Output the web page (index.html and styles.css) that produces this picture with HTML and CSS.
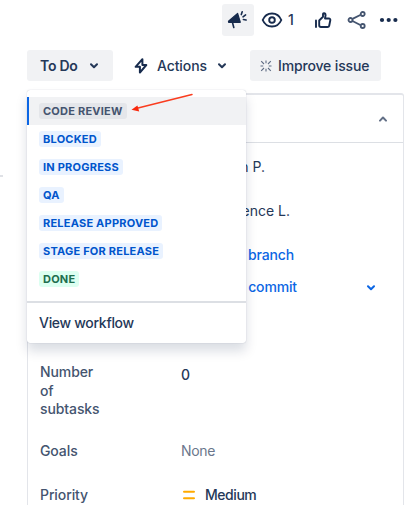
FILE: index.html
```html
<!DOCTYPE html>
<html lang="en">
<head>
<meta charset="utf-8">
<title>Issue details</title>
<link rel="stylesheet" href="styles.css">
</head>
<body>
<main class="page">
  <nav class="toolbar">
    <span class="announce"><svg width="32" height="32" viewBox="0 0 32 32"><path d="M6.5 17.3 15.6 9.5 18.3 18.3 6.8 18.5Z" fill="#172b4d" stroke="#172b4d" stroke-width="1.2" stroke-linejoin="round"/><path d="M10.6 19 11.8 23.5M19.3 10.6 20.2 7.7M21 12.8 23.6 10.9M21.4 15.5 24.1 16" fill="none" stroke="#172b4d" stroke-width="1.6" stroke-linecap="round"/></svg></span>
    <span class="watch"><svg width="22" height="18" viewBox="0 0 22 18" fill="none" stroke="#172b4d" stroke-width="1.9"><path d="M1.7 9C3.5 4.8 7 2.5 11 2.5S18.5 4.8 20.3 9C18.5 13.2 15 15.5 11 15.5S3.5 13.2 1.7 9Z"/><circle cx="11" cy="9" r="2.8"/></svg><span>1</span></span>
    <svg class="like" width="18" height="18" viewBox="0 0 18 18" fill="none" stroke="#172b4d" stroke-width="1.9" stroke-linejoin="round" stroke-linecap="round"><path d="M2 9.5V16M5.2 9.5 9 5.8V3.2C9 1.7 11.6 1.7 11.6 4L11 7.5H14.8C16 7.5 16.5 8.3 16.3 9.3L15.2 14.7C15 15.6 14.4 16 13.5 16H7C5.8 16 5.2 15.4 5.2 14.3Z"/></svg>
    <svg class="share" width="20" height="20" viewBox="0 0 20 20" fill="none" stroke="#44546f" stroke-width="1.8"><path d="M5.5 8.9 13.3 5M5.5 11 13.3 15"/><circle cx="3.5" cy="10" r="2"/><circle cx="15.7" cy="4" r="2"/><circle cx="15.7" cy="16" r="2"/></svg>
    <svg class="more" width="20" height="6" viewBox="0 0 20 6" fill="#172b4d"><circle cx="3" cy="3" r="2.1"/><circle cx="9.7" cy="3" r="2.1"/><circle cx="16.4" cy="3" r="2.1"/></svg>
  </nav>

  <div class="actions">
    <div class="button status"><span class="todo">To Do</span><svg width="8" height="6" viewBox="0 0 8 6"><path d="M1 1.2 4 4.3 7 1.2" class="chevron"/></svg></div>
    <div class="button plain"><svg class="bolt" width="14" height="18" viewBox="0 0 14 18"><path d="M8.4 2.2 1.6 9.8H5.9V15.6L12.3 8H8.4Z" fill="none" stroke="#172b4d" stroke-width="2" stroke-linejoin="round"/></svg><span class="actions-text">Actions</span><svg width="8" height="6" viewBox="0 0 8 6"><path d="M1 1.2 4 4.3 7 1.2" class="chevron"/></svg></div>
    <div class="button improve"><svg width="12" height="12" viewBox="0 0 12 12"><path d="M6 .5V3.2M6 8.8V11.5M.5 6H3.2M8.8 6H11.5M1.2 1.2 4 4M8 8 10.8 10.8M10.8 1.2 8 4M4 8 1.2 10.8" stroke="#5e6c84" stroke-width="1.1"/></svg><span class="improve-text">Improve issue</span></div>
  </div>

  <span class="edge-line"></span>

  <section class="panel">
    <header class="panel-head"><svg width="8" height="6" viewBox="0 0 8 6"><path d="M1 4.6 4 1.5 7 4.6" class="chevron muted"/></svg></header>
    <div class="fields">
      <div class="row person"><span class="end-p">n P.</span></div>
      <div class="row reporter"><span class="end-l">ence L.</span></div>
      <div class="row branch"><span class="end-b">branch</span></div>
      <div class="row commit"><span class="end-c">commit</span><svg width="10" height="6" viewBox="0 0 10 6"><path d="M2 1.2 5 4.2 8 1.2" class="chevron blue"/></svg></div>
      <div class="row subtasks"><span class="label">Number<br>of<br>subtasks</span><span class="zero">0</span></div>
      <div class="row goals"><span class="label">Goals</span><span class="none">None</span></div>
      <div class="row priority"><span class="label">Priority</span><span class="medium"><svg width="16" height="12" viewBox="0 0 16 12"><path d="M3 2.8H13M3 9.2H13" stroke="#ffab00" stroke-width="2" stroke-linecap="round"/></svg><span class="medium-text">Medium</span></span></div>
    </div>
  </section>

  <div class="menu">
    <div class="option selected"><span class="tag gray">CODE REVIEW</span></div>
    <div class="option"><span class="tag">BLOCKED</span></div>
    <div class="option"><span class="tag">IN PROGRESS</span></div>
    <div class="option"><span class="tag">QA</span></div>
    <div class="option"><span class="tag">RELEASE APPROVED</span></div>
    <div class="option"><span class="tag">STAGE FOR RELEASE</span></div>
    <div class="option"><span class="tag green">DONE</span></div>
    <div class="workflow">View workflow</div>
  </div>
  <svg class="arrow" width="66" height="22" viewBox="0 0 66 22"><path d="M62 2.5 8 16" stroke="#fa3c1e" stroke-width="1.5" stroke-linecap="round"/><path d="M1.5 17.7 7.4 13.4 9.2 19.5Z" fill="#f9290d"/></svg>
</main>
</body>
</html>
```
FILE: styles.css
```css
* { box-sizing: border-box; }
body { margin: 0; background: #fff; }
svg { display: block; flex: none; }
.page {
  position: relative;
  width: 411px;
  height: 512px;
  overflow: hidden;
  color: #253858;
  font: 500 14px/18px Inter, "Liberation Sans", sans-serif;
  white-space: nowrap;
}
.toolbar { display: flex; align-items: center; height: 50px; padding: 4px 0 15px 222px; }
.announce { width: 32px; height: 32px; border-radius: 3px; background: #f1f2f4; }
.watch { display: flex; align-items: center; gap: 5px; width: 44px; margin-left: 7px; }
.like { margin-left: 9px; }
.share { margin-left: 15px; }
.more { margin-left: 12px; }
.actions { display: flex; height: 31px; padding-left: 27px; }
.button { display: flex; align-items: center; border-radius: 3px; background: #f1f2f4; }
.status { width: 86px; padding-left: 13px; gap: 11px; }
.todo { width: 39px; font-weight: 600; letter-spacing: -.25px; }
.plain { width: 117px; margin-left: 20px; padding-left: 1px; background: none; }
.actions-text { width: 50px; margin: 0 11px 0 9px; letter-spacing: -.1px; }
.improve { width: 131px; padding-left: 10px; gap: 6px; }
.improve-text { letter-spacing: -.15px; }
.chevron { fill: none; stroke: #253858; stroke-width: 2; stroke-linecap: round; stroke-linejoin: round; }
.muted { stroke: #626f86; }
.blue { stroke: #0c66e4; }
.edge-line { position: absolute; left: 0; top: 175px; width: 3px; height: 2px; background: #dfe1e6; }
.panel { width: 377px; height: 412px; margin: 12px 0 0 27px; border: solid #e3e5ea; border-width: 2px 1px 0; border-radius: 3px 3px 0 0; }
.panel-head { display: flex; align-items: center; justify-content: flex-end; height: 48px; padding-right: 16px; border-bottom: 1px solid #dcdfe4; }
.fields { display: flex; flex-direction: column; padding: 15px 0 0 12px; }
.row { display: flex; height: 44px; }
.end-p, .end-l, .end-b, .end-c { text-align: right; font-weight: 400; }
.end-p { width: 225px; }
.end-l { width: 250px; }
.end-b { width: 254px; font-weight: 500; letter-spacing: -.15px; }
.end-c { width: 257px; font-weight: 500; letter-spacing: -.15px; }
.branch, .commit { color: #0c66e4; }
.branch { height: 32px; }
.commit { height: 85px; gap: 69px; }
.commit svg { margin-top: 7px; }
.label { width: 141px; color: #44546f; line-height: 18.7px; letter-spacing: -.1px; }
.subtasks { height: 79px; }
.zero { margin-top: 3px; }
.none { color: #6b778c; font-weight: 400; letter-spacing: -.3px; }
.medium { display: flex; height: 18px; align-items: center; gap: 8px; }
.medium-text { letter-spacing: -.45px; }
.menu {
  position: absolute;
  left: 27px;
  top: 90px;
  width: 219px;
  height: 253px;
  padding-top: 7px;
  border-radius: 3px;
  background: #fff;
  box-shadow: 0 8px 12px rgba(9,30,66,.15), 0 0 1px rgba(9,30,66,.31);
}
.option { display: flex; align-items: center; height: 28px; padding-left: 12px; }
.selected { padding-left: 10px; border-left: 2px solid #0c66e4; background: #f1f2f4; }
.tag { height: 16px; padding: 0 4px; border-radius: 3px; background: #e9f2ff; color: #0055cc; font: 700 11px/16px Inter, "Liberation Sans", sans-serif; letter-spacing: .22px; }
.gray { background: #e4e6ea; color: #44546f; }
.green { background: #dcfff1; color: #216e4e; }
.workflow { height: 42px; margin-top: 8px; padding: 11px 12px 0; border-top: 2px solid #dcdfe4; letter-spacing: -.3px; }
.arrow { position: absolute; left: 130px; top: 92px; }
```
